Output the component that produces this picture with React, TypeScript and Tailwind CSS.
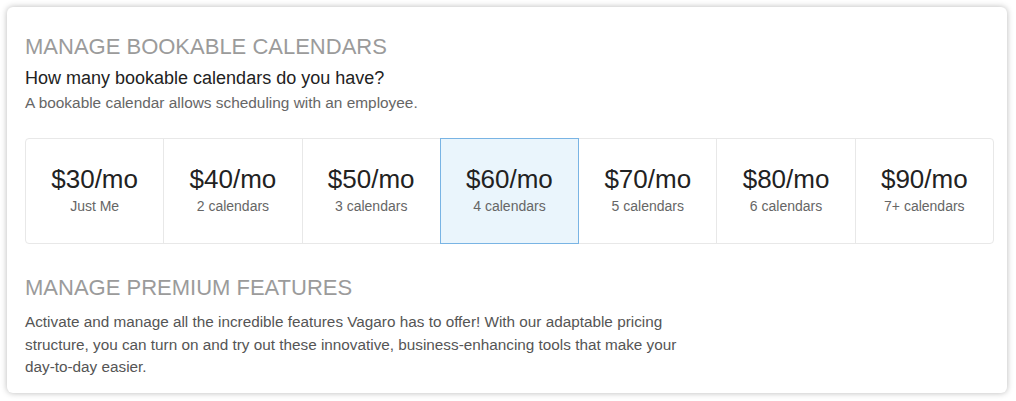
import React from 'react';

const PLANS = [
  { price: '$30/mo', label: 'Just Me' },
  { price: '$40/mo', label: '2 calendars' },
  { price: '$50/mo', label: '3 calendars' },
  { price: '$60/mo', label: '4 calendars' },
  { price: '$70/mo', label: '5 calendars' },
  { price: '$80/mo', label: '6 calendars' },
  { price: '$90/mo', label: '7+ calendars' },
];

export default function App() {
  const selected = 3;

  return (
    <div className="h-[401px] w-[1016px] bg-white p-[7px] font-['Liberation_Sans',Arial,sans-serif]">
      <div className="h-[386px] w-[1000px] rounded-md bg-white pl-[18px] pr-[13px] pt-[27px] shadow-[0_0_6px_rgba(0,0,0,0.28)]">
        {/* Bookable calendars */}
        <h2 className="text-[22px] leading-[26px] text-[#9b9b9b]">MANAGE BOOKABLE CALENDARS</h2>
        <p className="mt-[7px] text-[18px] leading-[22px] text-[#222]">How many bookable calendars do you have?</p>
        <p className="mt-[4px] text-[15.4px] leading-[20px] text-[#666]">
          A bookable calendar allows scheduling with an employee.
        </p>

        <div className="mt-[25px] flex h-[106px] rounded-[4px] border border-[#e8e8e8]">
          {PLANS.map((p, i) => (
            <div
              key={i}
              className={
                'flex flex-1 flex-col items-center justify-center pb-[4px] '
                + (i === selected
                  ? '-my-px border border-[#79b4e4] bg-[#eaf5fc]'
                  : i > 0 && i !== selected + 1 ? 'border-l border-[#e8e8e8]' : '')
              }
            >
              <div className="text-[26px] leading-[30px] text-[#222]">{p.price}</div>
              <div className="mt-[3px] text-[14px] leading-[18px] text-[#666]">{p.label}</div>
            </div>
          ))}
        </div>

        {/* Premium features */}
        <h2 className="mt-[31px] text-[22px] leading-[26px] text-[#9b9b9b]">MANAGE PREMIUM FEATURES</h2>
        <p className="mt-[10px] w-[680px] text-[15.3px] leading-[22.5px] text-[#555]">
          Activate and manage all the incredible features Vagaro has to offer! With our adaptable pricing
          structure, you can turn on and try out these innovative, business-enhancing tools that make your
          day-to-day easier.
        </p>
      </div>
    </div>
  );
}
